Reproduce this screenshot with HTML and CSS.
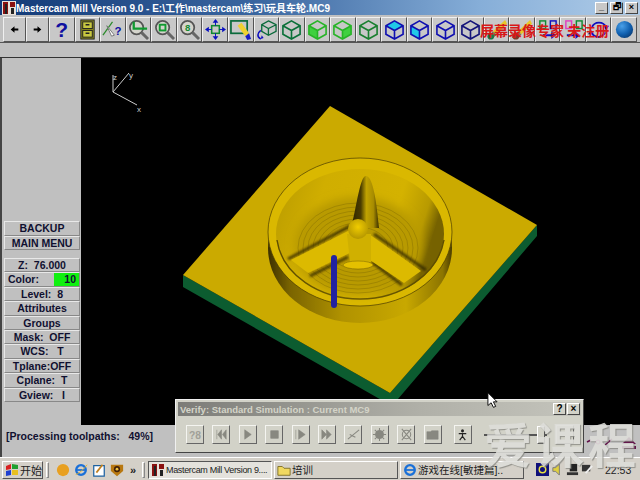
FILE: index.html
```html
<!DOCTYPE html>
<html lang="zh">
<head>
<meta charset="utf-8">
<title>Mastercam Mill Version 9.0</title>
<link rel="stylesheet" href="styles.css">
</head>
<body>
<svg class="defs" width="0" height="0">
  <defs>
    <symbol id="cube" viewBox="0 0 22 22"><path d="M11 2 20 7V16L11 21 2 16V7ZM2 7 11 12 20 7M11 12V21" fill="none" stroke="currentColor" stroke-width="1.7"/></symbol>
    <symbol id="mag" viewBox="0 0 22 22"><circle cx="9" cy="9" r="7" fill="#d4d4cc" stroke="#555" stroke-width="1.8"/><path d="M14 14 21 21" stroke="#666" stroke-width="3"/></symbol>
  </defs>
</svg>
<div class="app">
  <header class="title">
    <svg class="app-ico" viewBox="0 0 14 14"><rect width="14" height="14" fill="#e8e0d8"/><path d="M1 1H6V13H1ZM8 1H13V6H8Z" fill="#8a1010"/><path d="M3 3H5V13H3ZM9 7H12V13H9Z" fill="#222"/></svg>
    <span class="title-text">Mastercam Mill Version 9.0 - E:\工作\mastercam\练习\玩具车轮.MC9</span>
    <span class="win-btns">
      <span class="win-btn">_</span><span class="win-btn">🗗</span><span class="win-btn">×</span>
    </span>
  </header>

  <nav class="toolbar">
    <button class="tb"><svg viewBox="0 0 22 22"><path d="M7 11 11 7.500V10H15V12H11V14.500Z" fill="#000"/></svg></button>
    <button class="tb"><svg viewBox="0 0 22 22"><path d="M15 11 11 7.500V10H7V12H11V14.500Z" fill="#000"/></svg></button>
    <button class="tb"><span class="qm">?</span></button>
    <button class="tb"><svg viewBox="0 0 22 22"><rect x="4" y="1" width="14" height="20" fill="#8a8a20" stroke="#222"/><rect x="6" y="3" width="10" height="7" fill="#c8c840" stroke="#222"/><rect x="6" y="12" width="10" height="7" fill="#c8c840" stroke="#222"/><path d="M9 6H13M9 15H13" stroke="#222" stroke-width="1.5"/></svg></button>
    <button class="tb"><svg viewBox="0 0 22 22"><path d="M1 17 11 3" stroke="#2a8a2a" stroke-width="1.3"/><path d="M5 7 13 17 10 18Z" fill="#fff" stroke="#777"/><text x="13" y="17" class="svg-q">?</text></svg></button>
    <button class="tb"><svg viewBox="0 0 22 22"><use href="#mag" width="22" height="22"/><path d="M6 3V10H20" fill="none" stroke="#109a30" stroke-width="2.4"/></svg></button>
    <button class="tb"><svg viewBox="0 0 22 22"><use href="#mag" width="22" height="22"/><rect x="6" y="6" width="6" height="6" fill="none" stroke="#109a30" stroke-width="2"/></svg></button>
    <button class="tb"><svg viewBox="0 0 22 22"><use href="#mag" width="22" height="22"/><text x="9" y="13" class="svg-8">8</text></svg></button>
    <button class="tb"><svg viewBox="0 0 22 22"><rect x="7" y="7" width="8" height="8" fill="none" stroke="#108a30" stroke-width="1.6"/><path d="M11 0 14 4H8ZM11 22 14 18H8ZM0 11 4 8V14ZM22 11 18 8V14Z" fill="#0a10c0"/><path d="M11 3V7M11 15V19M3 11H7M15 11H19" stroke="#0a10c0" stroke-width="1"/></svg></button>
    <button class="tb"><svg viewBox="0 0 22 22"><rect x="1" y="2" width="17" height="13" fill="none" stroke="#0a6a3a" stroke-width="1.8"/><path d="M8 7 12 4 20 15 16 18Z" fill="#f0d030"/><path d="M16 18 20 15 22 21 18 22Z" fill="#1818c0"/></svg></button>
    <button class="tb"><svg viewBox="0 0 22 22"><path d="M13 2 21 6V13L13 17 6 13V6ZM6 6 13 10 21 6M13 10V17" fill="none" stroke="#0a6a3a" stroke-width="1.4"/><path d="M5 12C1 15 1 19 5 21" fill="none" stroke="#1010c0" stroke-width="1.6"/><path d="M5 21 8 20 6 17Z" fill="#1010c0"/></svg></button>
    <button class="tb"><svg class="dg" viewBox="0 0 22 22"><use href="#cube"/></svg></button>
    <button class="tb"><svg class="lg" viewBox="0 0 22 22"><path d="M2 7 11 12V21L2 16Z" fill="#40d040"/><use href="#cube"/></svg></button>
    <button class="tb"><svg class="lg" viewBox="0 0 22 22"><path d="M11 12 20 7V16L11 21Z" fill="#40d040"/><use href="#cube"/></svg></button>
    <button class="tb"><svg class="mg" viewBox="0 0 22 22"><use href="#cube"/></svg></button>
    <button class="tb"><svg class="bl" viewBox="0 0 22 22"><path d="M11 2 20 7 11 12 2 7Z" fill="#20c8e8"/><use href="#cube"/></svg></button>
    <button class="tb"><svg class="bl" viewBox="0 0 22 22"><path d="M2 7 11 12V21L2 16Z" fill="#20c8e8"/><use href="#cube"/></svg></button>
    <button class="tb"><svg class="bl" viewBox="0 0 22 22"><use href="#cube"/></svg></button>
    <button class="tb"><svg class="nv" viewBox="0 0 22 22"><use href="#cube"/></svg></button>
    <button class="tb"><svg viewBox="0 0 22 22"><path d="M20 1 7 13 11 16 22 5Z" fill="#e8c828"/><path d="M7 13 11 16 7 21 3 18Z" fill="#775"/><circle cx="5" cy="18" r="3.5" fill="#1a7a4a"/></svg></button>
    <button class="tb"><svg viewBox="0 0 22 22"><path d="M20 1 7 13 11 16 22 5Z" fill="#e8c828"/><path d="M7 13 11 16 7 21 3 18Z" fill="#775"/><circle cx="5" cy="18" r="3.5" fill="#7a3a2a"/></svg></button>
    <button class="tb"><svg viewBox="0 0 22 22"><rect x="3" y="2" width="6" height="8" fill="none" stroke="#108a30" stroke-width="1.5"/><rect x="14" y="2" width="6" height="8" fill="none" stroke="#1010c0" stroke-width="1.5"/><path d="M6 16H15V13L20 17 15 21V18H6Z" fill="#1010c0"/></svg></button>
    <button class="tb"><svg viewBox="0 0 22 22"><rect x="3" y="2" width="6" height="8" fill="none" stroke="#e040c0" stroke-width="1.5"/><rect x="14" y="2" width="6" height="8" fill="none" stroke="#108a30" stroke-width="1.5"/><path d="M4 16H13V13L18 17 13 21V18H4Z" fill="#1010c0"/></svg></button>
    <button class="tb"><svg viewBox="0 0 22 22"><path d="M4 9A8 8 0 0 1 19 9M18 14A8 8 0 0 1 4 15" fill="none" stroke="#1010c0" stroke-width="1.8"/><path d="M19 12 22 7H16ZM3 11 0 16H6Z" fill="#1010c0"/></svg></button>
    <button class="tb"><svg viewBox="0 0 22 22"><defs><radialGradient id="sph" cx=".35" cy=".3" r=".8"><stop offset="0" stop-color="#4aa0e8"/><stop offset=".6" stop-color="#1060b0"/><stop offset="1" stop-color="#083870"/></radialGradient></defs><circle cx="11" cy="11" r="9" fill="url(#sph)"/></svg></button>
  </nav>
  <div class="band"></div>

  <main class="main">
    <aside class="panel">
      <div class="menu">
        <div class="mbtn">BACKUP</div>
        <div class="mbtn">MAIN MENU</div>
      </div>
      <div class="menu">
        <div class="mbtn">Z:  76.000</div>
        <div class="mbtn color"><span>Color:</span><span class="swatch">10</span></div>
        <div class="mbtn">Level:  8</div>
        <div class="mbtn">Attributes</div>
        <div class="mbtn">Groups</div>
        <div class="mbtn">Mask:  OFF</div>
        <div class="mbtn">WCS:   T</div>
        <div class="mbtn">Tplane:OFF</div>
        <div class="mbtn">Cplane:  T</div>
        <div class="mbtn">Gview:   I</div>
      </div>
    </aside>
    <section class="viewport">
      <svg class="model" viewBox="81 58 559 367">
        <defs>
          <filter id="soft" x="-5%" y="-5%" width="110%" height="110%"><feGaussianBlur stdDeviation="0.6"/></filter>
          <filter id="soft2" x="-20%" y="-20%" width="140%" height="140%"><feGaussianBlur stdDeviation="1.2"/></filter>
          <filter id="soft3" x="-20%" y="-20%" width="140%" height="140%"><feGaussianBlur stdDeviation="4"/></filter>
          <linearGradient id="side" x1="0" x2="1" y1="0" y2="0">
            <stop offset="0" stop-color="#3c3000"/><stop offset=".12" stop-color="#7a6400"/><stop offset=".4" stop-color="#b09200"/><stop offset=".75" stop-color="#c8a800"/><stop offset=".95" stop-color="#8c7400"/><stop offset="1" stop-color="#4a3c00"/>
          </linearGradient>
          <linearGradient id="wall" x1="0" x2="1" y1="0" y2=".25">
            <stop offset="0" stop-color="#b89a00"/><stop offset=".3" stop-color="#d0ae00"/><stop offset=".75" stop-color="#d4b200"/><stop offset=".92" stop-color="#b89a00"/><stop offset="1" stop-color="#766200"/>
          </linearGradient>
          <linearGradient id="spikeg" x1="0" x2="1" y1="0" y2="0">
            <stop offset="0" stop-color="#2e2400"/><stop offset=".35" stop-color="#4a3c00"/><stop offset=".55" stop-color="#c0a200"/><stop offset=".8" stop-color="#a88c00"/><stop offset="1" stop-color="#3a2e00"/>
          </linearGradient>
          <radialGradient id="hub" cx=".5" cy=".4" r=".6">
            <stop offset="0" stop-color="#f0cc00"/><stop offset="1" stop-color="#b49600"/>
          </radialGradient>
        </defs>
        <path class="plate-side" d="M183 275V287L392 406 537 236V225L390 393Z"/>
        <path class="plate-top" d="M330 106 537 225 390 393 183 275Z"/>
        <g filter="url(#soft)">
          <ellipse cx="360" cy="248" rx="92" ry="75" fill="url(#side)"/>
          <ellipse cx="360" cy="232" rx="92" ry="74" class="rim"/>
          <ellipse cx="360" cy="234" rx="84" ry="65" fill="url(#wall)"/>
          <path class="wall-low" d="M277 240C282 275 320 299 360 299 400 299 438 275 444 240"/>
          <ellipse cx="358" cy="246" rx="64" ry="49" class="floor" filter="url(#soft3)"/>
          <g class="rings">
            <ellipse cx="358" cy="248" rx="60" ry="45"/>
            <ellipse cx="358" cy="248" rx="55" ry="41"/>
            <ellipse cx="358" cy="248" rx="50" ry="37"/>
            <ellipse cx="358" cy="248" rx="45" ry="33"/>
            <ellipse cx="358" cy="248" rx="40" ry="29"/>
            <ellipse cx="358" cy="248" rx="35" ry="25"/>
            <ellipse cx="358" cy="248" rx="30" ry="21"/>
          </g>
          <path class="spoke-shadow" d="M288 259 350 226M426 270 374 234M310 276 348 257M402 285 372 262" filter="url(#soft2)"/>
          <path fill="url(#spikeg)" d="M366 176C372 176 376 195 379 228H351C357 205 360 176 366 176Z"/>
          <path class="spoke" d="M291 260 350 230 356 250 308 273Z"/>
          <path class="spoke" d="M369 234 421 271 404 283 358 252Z"/>
          <path class="spoke-low" d="M347 234H371V262H350Z"/>
          <circle cx="358" cy="229" r="10" fill="url(#hub)"/>
          <ellipse cx="358" cy="265" rx="15" ry="4" class="hub-base"/>
        </g>
        <rect x="331" y="255" width="6" height="53" rx="3" class="tool"/>
        <g class="axis">
          <path d="M113 92 129 73M113 92 137 105M113 92V75"/>
          <text x="129" y="78">y</text>
          <text x="137" y="112">x</text>
          <text x="113" y="80">z</text>
        </g>
      </svg>
    </section>
  </main>

  <div class="status">[Processing toolpaths:   49%]</div>

  <footer class="taskbar">
    <button class="start"><svg viewBox="0 0 14 14"><path d="M1 3 6 1V6L1 7Z" fill="#d82020"/><path d="M7 1 13 2V6L7 6Z" fill="#20a030"/><path d="M1 8 6 7V12L1 13Z" fill="#2040d0"/><path d="M7 7H13V12L7 12Z" fill="#e8c020"/></svg>开始</button>
    <span class="sep"></span>
    <span class="quick">
      <svg viewBox="0 0 16 16"><circle cx="8" cy="8" r="7" fill="#e8a020"/><path d="M3 10A6 6 0 0 1 12 3 6 6 0 0 0 3 10Z" fill="#2060d0"/></svg>
      <svg viewBox="0 0 16 16"><circle cx="8" cy="8" r="5.500" fill="none" stroke="#1a70d8" stroke-width="2.6"/><path d="M3 8H13" stroke="#1a70d8" stroke-width="2"/><path d="M2 13C5 13 12 6 15 2" fill="none" stroke="#e8b020" stroke-width="1"/></svg>
      <svg viewBox="0 0 16 16"><rect x="2" y="3" width="12" height="12" fill="#fff" stroke="#1a60a0" stroke-width="1.4"/><path d="M5 11 12 2" stroke="#c08020" stroke-width="2"/></svg>
      <svg viewBox="0 0 16 16"><path d="M1 2H15V9L8 15 1 9Z" fill="#b87810"/><circle cx="8" cy="7" r="3.500" fill="#402008"/><circle cx="8" cy="7" r="1.600" fill="#f0c040"/></svg>
      <span class="more">»</span>
    </span>
    <span class="sep"></span>
    <button class="task active"><svg class="task-ico" viewBox="0 0 14 14"><rect width="14" height="14" fill="#e8e0d8"/><path d="M1 1H6V13H1ZM8 1H13V6H8Z" fill="#8a1010"/><path d="M3 3H5V13H3ZM9 7H12V13H9Z" fill="#222"/></svg>Mastercam Mill Version 9....</button>
    <button class="task"><svg class="task-ico" viewBox="0 0 16 14"><path d="M1 3H6L8 5H15V13H1Z" fill="#f0d860" stroke="#7a6a20"/></svg>培训</button>
    <button class="task"><svg class="task-ico" viewBox="0 0 16 16"><circle cx="8" cy="8" r="5.500" fill="none" stroke="#1a70d8" stroke-width="2.6"/><path d="M3 8H13" stroke="#1a70d8" stroke-width="2"/></svg>游戏在线[敏捷篇]..</button>
    <span class="tray">
      <svg viewBox="0 0 14 14"><rect width="14" height="14" fill="#10107a"/><circle cx="7" cy="7" r="3.500" fill="none" stroke="#e8e040" stroke-width="1.6"/></svg>
      <svg viewBox="0 0 14 14"><path d="M2 5H5L9 1V13L5 9H2Z" fill="#e0d040" stroke="#777"/></svg>
      <svg viewBox="0 0 14 14"><rect x="4" y="1" width="8" height="8" fill="#222"/><rect x="1" y="10" width="12" height="3" fill="#333"/></svg>
      <svg viewBox="0 0 14 14"><rect x="1" y="2" width="9" height="7" fill="#333"/><path d="M5 11 12 3" stroke="#eee" stroke-width="2"/></svg>
      <span class="clock">22:53</span>
    </span>
  </footer>

  <aside class="verify">
    <div class="v-title">
      <span class="v-text">Verify: Standard Simulation : Current MC9</span>
      <span class="v-btn">?</span><span class="v-btn">×</span>
    </div>
    <div class="v-body">
      <span class="vb"><svg viewBox="0 0 16 16"><text x="1" y="13" class="svg-v">?8</text></svg></span>
      <span class="vb"><svg viewBox="0 0 16 16"><path d="M3 3V13M8 3 4 8 8 13ZM13 3 9 8 13 13Z" class="vg"/></svg></span>
      <span class="vb"><svg viewBox="0 0 16 16"><path d="M5 3 12 8 5 13Z" class="vg"/></svg></span>
      <span class="vb"><svg viewBox="0 0 16 16"><rect x="4" y="4" width="8" height="8" class="vg"/></svg></span>
      <span class="vb"><svg viewBox="0 0 16 16"><path d="M3 3V13M6 3 13 8 6 13Z" class="vg"/></svg></span>
      <span class="vb"><svg viewBox="0 0 16 16"><path d="M3 3 8 8 3 13ZM8 3 13 8 8 13Z" class="vg"/></svg></span>
      <span class="vb"><svg viewBox="0 0 16 16"><path d="M2 13 14 3M4 8 10 11" class="vl"/></svg></span>
      <span class="vb"><svg viewBox="0 0 16 16"><circle cx="8" cy="8" r="4.500" class="vg"/><path d="M8 1V15M1 8H15M3 3 13 13M13 3 3 13" class="vl"/></svg></span>
      <span class="vb"><svg viewBox="0 0 16 16"><circle cx="8" cy="8" r="4.500" class="vl"/><path d="M3 2 13 14M13 2 3 14" class="vl"/></svg></span>
      <span class="vb"><svg viewBox="0 0 16 16"><path d="M2 5H6L7 4H14V13H2Z" class="vg"/></svg></span>
      <span class="vb person"><svg viewBox="0 0 16 16"><circle cx="8" cy="4" r="1.600" fill="#222"/><path d="M8 6V10M4 7H12M8 10 5 14M8 10 11 14" fill="none" stroke="#222" stroke-width="1.2"/></svg></span>
      <span class="slider"><span class="thumb"></span></span>
      <span class="vb"></span>
    </div>
  </aside>

  <div class="recorder-mark">屏幕录像专家 未注册</div>
  <svg class="eject" viewBox="0 0 52 14"><path d="M44 1 51 8H37Z" fill="#601048"/><rect x="37" y="10" width="14" height="3" fill="#601048"/><path d="M2 6 6 4M20 9 27 3" stroke="#601048" stroke-width="1.600"/><circle cx="13" cy="6" r="2" fill="none" stroke="#a04080"/></svg>
  <div class="course-mark">爱课程</div>
  <svg class="cursor" viewBox="0 0 12 18"><path d="M1 1V15L4.500 12 7 17 9.500 16 7 11H11Z" fill="#fff" stroke="#000"/></svg>
</div>
</body>
</html>
```

FILE: styles.css
```css
* { box-sizing: border-box; }
html, body { margin: 0; padding: 0; background: #000; }
.defs { position: absolute; }
.app {
  position: relative;
  width: 640px;
  height: 480px;
  overflow: hidden;
  display: flex;
  flex-direction: column;
  background: #c0c0c0;
  font-family: "Liberation Sans", "Noto Sans CJK SC", sans-serif;
}
.title {
  height: 15px;
  flex: none;
  display: flex;
  align-items: center;
  background: linear-gradient(90deg, #123a78 0%, #3a66a0 40%, #86aed8 75%, #b0cce8 100%);
  color: #fff;
  font-size: 10px;
  font-weight: bold;
  white-space: nowrap;
}
.app-ico { width: 14px; height: 14px; margin-left: 2px; flex: none; }
.title-text { flex: 1; }
.win-btns { display: flex; gap: 0; padding-right: 2px; }
.win-btns .win-btn {
  width: 13px; height: 12px; margin-left: 2px;
  background: #c8c8c8;
  border: 1px solid;
  border-color: #fff #444 #444 #fff;
  color: #000;
  font-size: 9px;
  line-height: 9px;
  text-align: center;
}
.toolbar {
  height: 28px;
  flex: none;
  display: grid;
  grid-template-columns: 23px 23px repeat(23, 1fr);
  padding: 2px 3px 0;
  background: #c0c0c0;
  border-bottom: 1px solid #555;
}
.tb {
  padding: 0;
  background: #c8c8c8;
  border: 1px solid;
  border-color: #f0f0f0 #555 #555 #f0f0f0;
  display: flex;
  align-items: center;
  justify-content: center;
}
.tb svg { width: 21px; height: 21px; }
.qm { color: #1010a0; font: bold 21px/21px "Liberation Sans", sans-serif; }
.svg-q { fill: #1010a0; font: bold 12px "Liberation Sans", sans-serif; }
.svg-8 { fill: #108a30; font: bold 10px "Liberation Sans", sans-serif; text-anchor: middle; }
.dg { color: #0a7038; }
.lg { color: #28b428; }
.mg { color: #1a8030; }
.bl { color: #1010b0; }
.nv { color: #14147a; }
.band { height: 15px; flex: none; background: #c0c0c0; border-bottom: 1px solid #333; }
.main { flex: 1; display: flex; min-height: 0; background: #000; }
.panel {
  width: 81px;
  flex: none;
  display: flex;
  flex-direction: column;
  justify-content: flex-end;
  gap: 8px;
  padding: 0 1px 23px 4px;
  background: #c0c0c0;
  box-shadow: inset 2px 0 0 #444;
}
.menu { display: flex; flex-direction: column; }
.mbtn {
  height: 14.4px;
  background: #c0c0c0;
  border: 1px solid;
  border-color: #e8e8e8 #888 #888 #e8e8e8;
  color: #101030;
  font-size: 10.5px;
  font-weight: bold;
  line-height: 12px;
  text-align: center;
  white-space: pre;
}
.color { display: flex; justify-content: space-between; padding-left: 3px; text-align: left; }
.swatch { width: 25px; background: #10f010; text-align: right; padding-right: 3px; }
.viewport { flex: 1; min-width: 0; }
.model { display: block; width: 100%; height: 100%; }
.plate-side { fill: #0c5c30; }
.plate-top { fill: #cbaa00; }
.rim { fill: #dab800; stroke: #4a3c00; stroke-width: 0.7; }
.wall-low { fill: none; stroke: #5e4e00; stroke-width: 1.4; }
.floor { fill: #b89a00; }
.rings ellipse { fill: none; stroke: #6e5c00; stroke-width: 0.6; opacity: 0.55; }
.spoke-shadow { fill: none; stroke: #2a2200; stroke-width: 3; opacity: 0.75; }
.spoke { fill: #dcba00; }
.spoke-low { fill: #d0b000; }
.hub-base { fill: #e4c000; stroke: #8a7200; stroke-width: 0.6; }
.tool { fill: #2222a0; }
.axis path { fill: none; stroke: #ccc; stroke-width: 1; }
.axis text { fill: #ccc; font: 8px "Liberation Sans", sans-serif; }
.status {
  height: 32px;
  flex: none;
  padding: 5px 0 0 6px;
  background: #c0c0c0;
  box-shadow: inset 2px 0 0 #444;
  color: #101030;
  font-size: 10.5px;
  font-weight: bold;
  white-space: pre;
}
.taskbar {
  height: 23px;
  flex: none;
  display: flex;
  align-items: center;
  background: #d4d0c8;
  border-top: 1px solid #fff;
  padding: 1px 0 0 2px;
  font-size: 11px;
  color: #222;
}
.start, .task {
  height: 18px;
  padding: 0 2px;
  display: flex;
  align-items: center;
  gap: 1px;
  background: #d4d0c8;
  border: 1px solid;
  border-color: #fff #555 #555 #fff;
  font: 10.5px "Liberation Sans", "Noto Sans CJK SC", sans-serif;
  color: #222;
  white-space: nowrap;
  overflow: hidden;
}
.start { width: 41px; font-size: 11px; }
.start svg { width: 14px; height: 14px; flex: none; }
.sep { width: 3px; height: 16px; margin: 0 3px; border: 1px solid; border-color: #fff #888 #888 #fff; }
.quick { display: flex; align-items: center; gap: 4px; width: 87px; padding-left: 4px; }
.quick svg { width: 14px; height: 14px; flex: none; }
.more { font-size: 11px; font-weight: bold; margin-left: 2px; }
.task { width: 124px; margin-right: 2px; justify-content: flex-start; }
.task.active { border-color: #555 #fff #fff #555; background: #e4e2dc; font-size: 9px; letter-spacing: -0.33px; }
.task-ico { width: 14px; height: 14px; flex: none; }
.tray {
  margin-left: 8px;
  flex: 1;
  display: flex;
  align-items: center;
  gap: 2px;
  height: 18px;
  padding-left: 2px;
}
.tray svg { width: 13px; height: 13px; flex: none; }
.clock { margin-left: 9px; font-size: 10.5px; }
.verify {
  position: absolute;
  left: 175px;
  top: 399px;
  width: 409px;
  height: 54px;
  background: #d2d2c8;
  border: 1px solid;
  border-color: #f0f0f0 #444 #444 #f0f0f0;
  padding: 2px;
}
.v-title {
  height: 14px;
  display: flex;
  align-items: center;
  background: linear-gradient(90deg, #7c7c78, #b0b0a8 60%, #c4c4bc);
  color: #d4d4c8;
  font-size: 9.5px;
  font-weight: bold;
  padding-left: 2px;
}
.v-text { flex: 1; }
.v-btn {
  width: 13px; height: 12px; margin-right: 1px;
  background: #d2d2c8;
  border: 1px solid;
  border-color: #fff #444 #444 #fff;
  color: #000;
  font-size: 10px;
  line-height: 10px;
  text-align: center;
}
.v-body { display: flex; align-items: center; gap: 8.4px; padding: 9px 0 0 8px; }
.vb {
  width: 18px; height: 19px; flex: none;
  background: #d2d2c8;
  border: 1px solid;
  border-color: #f4f4f0 #666 #666 #f4f4f0;
  display: flex;
  align-items: center;
  justify-content: center;
}
.vb svg { width: 15px; height: 15px; }
.vg { fill: #888880; stroke: #888880; stroke-width: 0.6; }
.vl { fill: none; stroke: #888880; stroke-width: 1.1; }
.svg-v { fill: #a0a098; font: bold 11px "Liberation Sans", sans-serif; }
.person { margin-left: 4px; }
.slider { width: 63px; height: 2px; margin-left: 4px; background: #555; position: relative; flex: none; }
.thumb { position: absolute; right: 2px; top: -8px; width: 8px; height: 18px; background: #d2d2c8; border: 1px solid; border-color: #fff #555 #555 #fff; }
.recorder-mark {
  position: absolute;
  left: 480px;
  top: 21px;
  color: #d81818;
  font: bold 14px/18px "Noto Sans CJK SC", sans-serif;
  white-space: pre;
}
.eject { position: absolute; left: 585px; top: 436px; width: 52px; height: 14px; }
.course-mark {
  position: absolute;
  left: 484px;
  top: 418px;
  color: #dededa;
  font: bold 48px/48px "Noto Sans CJK SC", sans-serif;
  letter-spacing: 4px;
  white-space: nowrap;
  opacity: 0.88;
  text-shadow: 1px 1px 1px #8a8a84;
}
.cursor { position: absolute; left: 487px; top: 391px; width: 11px; height: 18px; }
```
